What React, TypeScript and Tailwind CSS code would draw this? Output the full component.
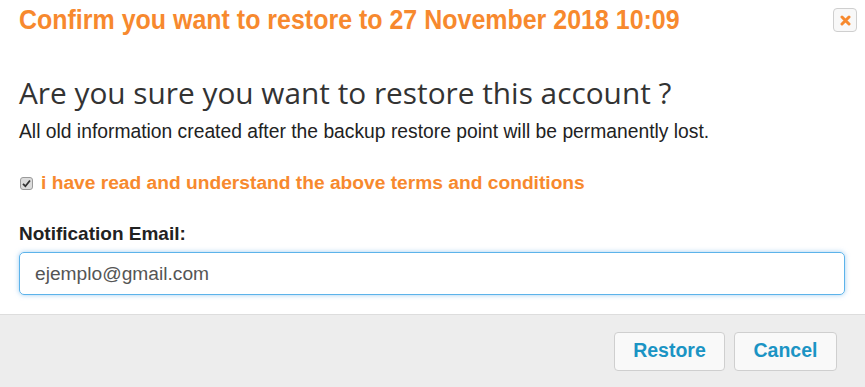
export default function App() {
  return (
    <div className="w-[865px] h-[387px] bg-white flex flex-col font-['Liberation_Sans',Arial,sans-serif] text-[#333] overflow-hidden">
      <div className="flex items-start justify-between pl-[19px] pr-[8px] pt-[5px]">
        <h1 className="origin-left scale-x-[0.925] whitespace-nowrap font-bold text-[27px] leading-[30px] text-[#f7892e]">
          Confirm you want to restore to 27 November 2018 10:09
        </h1>
        <button className="mt-[3px] w-[24px] h-[24px] rounded-[4px] border border-[#cfcfcf] bg-[#f8f8f8] flex items-center justify-center">
          <svg width="11" height="11" viewBox="0 0 11 11">
            <path d="M2 2 L9 9 M9 2 L2 9" stroke="#f7892e" strokeWidth="3" strokeLinecap="round" />
          </svg>
        </button>
      </div>

      <div className="px-[19px] flex-1">
        <h2 className="mt-[40px] font-['Open_Sans',sans-serif] text-[29.8px] leading-[36px] text-[#333]">
          Are you sure you want to restore this account ?
        </h2>
        <p className="mt-[9px] text-[19.3px] leading-[24px] text-[#222]">
          All old information created after the backup restore point will be permanently lost.
        </p>

        <label className="mt-[27px] flex items-center gap-[8px] h-[24px]">
          <span className="ml-[1px] w-[13px] h-[13px] rounded-[3px] border border-[#9a9a9a] bg-[#dcdcdc] flex items-center justify-center">
            <svg width="9" height="9" viewBox="0 0 9 9">
              <path d="M1 4.8 L3.4 7.2 L8 1.5" fill="none" stroke="#333" strokeWidth="1.8" />
            </svg>
          </span>
          <span className="text-[19.2px] font-bold text-[#f7892e] leading-[24px]">
            i have read and understand the above terms and conditions
          </span>
        </label>

        <div className="mt-[27px] text-[19px] font-bold text-[#222] leading-[24px]">Notification Email:</div>
        <input
          type="text"
          defaultValue="ejemplo@gmail.com"
          className="mt-[6px] w-[826px] h-[43px] rounded-[5px] border border-[#5cb3ea] shadow-[0_0_5px_rgba(102,175,233,0.6)] px-[15px] text-[19.2px] text-[#555] outline-none"
        />
      </div>

      <div className="h-[73px] bg-[#ededed] border-t border-[#dddddd] flex items-center justify-end gap-[9px] pr-[28px]">
        <button className="w-[111px] h-[39px] rounded-[4px] border border-[#cfcfcf] bg-[#f9f9f9] text-[19.5px] font-bold text-[#1b94c4]">
          Restore
        </button>
        <button className="w-[103px] h-[39px] rounded-[4px] border border-[#cfcfcf] bg-[#f9f9f9] text-[19.5px] font-bold text-[#1b94c4]">
          Cancel
        </button>
      </div>
    </div>
  );
}
